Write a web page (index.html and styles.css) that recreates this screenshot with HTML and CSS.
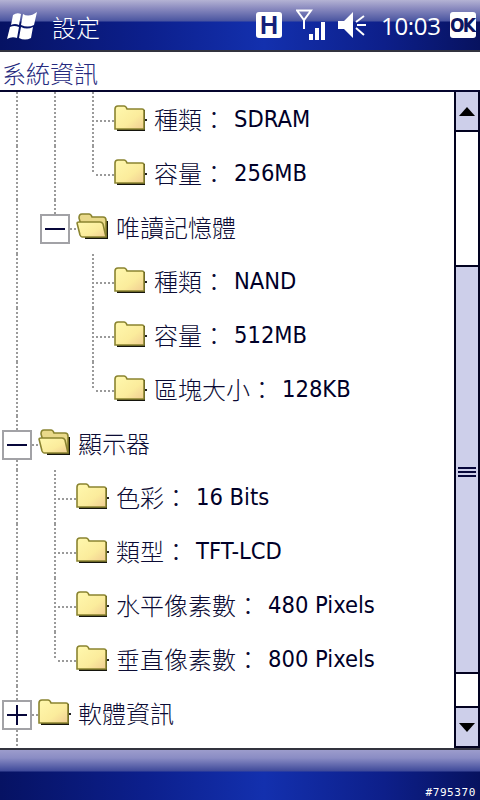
FILE: index.html
```html
<!DOCTYPE html>
<html lang="zh-Hant">
<head>
<meta charset="utf-8">
<title>設定</title>
<link rel="stylesheet" href="styles.css">
</head>
<body>
<svg class="defs" width="0" height="0" aria-hidden="true">
  <defs>
    <linearGradient id="fy" x1="0" y1="0" x2="1" y2="1">
      <stop offset="0" stop-color="#fff8ae"/>
      <stop offset=".6" stop-color="#fbec9c"/>
      <stop offset="1" stop-color="#f0cc92"/>
    </linearGradient>
    <symbol id="closed" viewBox="0 0 34 28">
      <path d="M3 5h28v21H3z" fill="#14140c"/>
      <path d="M30 14h3v2h-3z" fill="#222"/>
      <path d="M1 4Q1 1 4 1h6q2 0 3 3h15q2 0 2 2v18H1z" fill="url(#fy)" stroke="#8a8430" stroke-width="1.600"/>
    </symbol>
    <symbol id="open" viewBox="0 0 34 28">
      <path d="M9 8h23v18H9z" fill="#14140c"/>
      <path d="M3 5Q3 1 6 1h7q2 0 3 3h11q3 0 3 3v16H8z" fill="#e9d98a" stroke="#8a8430" stroke-width="1.600"/>
      <path d="M1 10q0-1 2-1h21q2 0 3 2l3 13H6q-1 0-2-2z" fill="url(#fy)" stroke="#8a8430" stroke-width="1.600"/>
    </symbol>
  </defs>
</svg>
<div class="phone">
  <header class="topbar">
    <svg class="logo" width="32" height="30" viewBox="0 0 32 30" aria-hidden="true">
      <path d="M7 4Q11 1 15 3L13 14Q9 12 5 14Z M17 3Q23 7 31 1L28 14Q22 17 15 14Z M4 16Q8 14 13 16L11 27Q6 25 1 28Z M15 16Q21 19 27 16L25 27Q19 30 13 27Z" fill="#fff"/>
    </svg>
    <span class="title">設定</span>
    <span class="spacer"></span>
    <span class="badge badge-h">H</span>
    <svg class="signal" width="30" height="32" viewBox="0 0 30 32" aria-hidden="true">
      <path d="M1 1.500H15L8 11ZM8 11V20" fill="none" stroke="#fff" stroke-width="2"/>
      <path d="M13 25h4v6h-4zM19 19h4v12h-4zM25 13h4v18h-4z" fill="#fff"/>
    </svg>
    <svg class="speaker" width="28" height="28" viewBox="0 0 28 28" aria-hidden="true">
      <path d="M0 10h6L15 1v26L6 18H0z" fill="#fff"/>
      <path d="M18 11L26 5M19 14H28M18 17L26 24" stroke="#fff" stroke-width="2" fill="none"/>
    </svg>
    <span class="clock">10:03</span>
    <span class="badge badge-ok">OK</span>
  </header>
  <div class="subtitle">系統資訊</div>
  <main class="content">
    <div class="tree">
      <div class="row"><i class="cell pass"></i><i class="cell pass"></i><i class="cell tee"></i><svg class="folder"><use href="#closed"/></svg><span class="label">種類：<span class="val">SDRAM</span></span></div>
      <div class="row"><i class="cell pass"></i><i class="cell pass"></i><i class="cell last"></i><svg class="folder"><use href="#closed"/></svg><span class="label">容量：<span class="val">256MB</span></span></div>
      <div class="row"><i class="cell pass"></i><i class="cell last"><b class="box minus"></b></i><svg class="folder"><use href="#open"/></svg><span class="label">唯讀記憶體</span></div>
      <div class="row"><i class="cell pass"></i><i class="cell"></i><i class="cell tee"></i><svg class="folder"><use href="#closed"/></svg><span class="label">種類：<span class="val">NAND</span></span></div>
      <div class="row"><i class="cell pass"></i><i class="cell"></i><i class="cell tee"></i><svg class="folder"><use href="#closed"/></svg><span class="label">容量：<span class="val">512MB</span></span></div>
      <div class="row"><i class="cell pass"></i><i class="cell"></i><i class="cell last"></i><svg class="folder"><use href="#closed"/></svg><span class="label">區塊大小：<span class="val">128KB</span></span></div>
      <div class="row"><i class="cell tee"><b class="box minus"></b></i><svg class="folder"><use href="#open"/></svg><span class="label">顯示器</span></div>
      <div class="row"><i class="cell pass"></i><i class="cell tee"></i><svg class="folder"><use href="#closed"/></svg><span class="label">色彩：<span class="val">16 Bits</span></span></div>
      <div class="row"><i class="cell pass"></i><i class="cell tee"></i><svg class="folder"><use href="#closed"/></svg><span class="label">類型：<span class="val">TFT-LCD</span></span></div>
      <div class="row"><i class="cell pass"></i><i class="cell tee"></i><svg class="folder"><use href="#closed"/></svg><span class="label">水平像素數：<span class="val">480 Pixels</span></span></div>
      <div class="row"><i class="cell pass"></i><i class="cell last"></i><svg class="folder"><use href="#closed"/></svg><span class="label">垂直像素數：<span class="val">800 Pixels</span></span></div>
      <div class="row"><i class="cell tee"><b class="box plus"></b></i><svg class="folder"><use href="#closed"/></svg><span class="label">軟體資訊</span></div>
      <div class="tail"><i class="cell pass"></i></div>
    </div>
    <aside class="scrollbar">
      <div class="sb-btn"><span class="arrow-up"></span></div>
      <div class="sb-track sb-track-top"></div>
      <div class="sb-thumb"><span class="grip"></span></div>
      <div class="sb-track sb-track-bottom"></div>
      <div class="sb-btn"><span class="arrow-down"></span></div>
    </aside>
  </main>
  <footer class="bottombar"><span class="watermark">#795370</span></footer>
</div>
</body>
</html>
```
FILE: styles.css
```css
* { box-sizing: border-box; }
html, body { margin: 0; padding: 0; }
body { background: #fff; font-family: "DejaVu Sans", "Noto Sans CJK TC", sans-serif; overflow: hidden; }
.defs { position: absolute; }
.phone { width: 480px; height: 800px; display: flex; flex-direction: column; }

.topbar {
  height: 52px; display: flex; align-items: center; color: #fff;
  border-bottom: 2px solid #33343f;
  background:
    linear-gradient(to bottom, #b4b3d4 0, #8c8cc0 8px, #4a55a0 21px, rgba(0,0,0,0) 22px),
    linear-gradient(to right, #061263 0, #0c1f8c 30%, #1330ae 55%, #0d1f8a 80%, #07125f 100%);
}
.logo { margin-left: 6px; margin-top: 2px; flex: none; }
.title { margin-left: 14px; font-size: 24px; line-height: 28px; font-family: "Noto Sans CJK TC", sans-serif; font-weight: 300; margin-top: 3px; }
.spacer { flex: 1; }
.badge {
  width: 26px; height: 26px; border-radius: 3px; background: #fff; color: #14207a;
  display: flex; align-items: center; justify-content: center; font-weight: 700;
  font-family: "Liberation Sans", sans-serif; flex: none;
}
.badge-h { font-size: 25px; }
.badge-ok { font-family: "DejaVu Sans", sans-serif; font-stretch: condensed; font-size: 19px; letter-spacing: -2px; padding-right: 2px; color: #0d1660; margin-left: 9px; margin-right: 4px; }
.signal { margin-left: 14px; flex: none; }
.speaker { margin-left: 12px; flex: none; }
.clock { margin-left: 15px; font-size: 24px; font-family: "Open Sans", sans-serif; line-height: 28px; width: 60px; letter-spacing: -.3px; margin-top: 2px; }

.subtitle {
  height: 40px; padding: 6px 0 0 2px; font-size: 24px; line-height: 30px; color: #262a7e;
  border-bottom: 2px solid #05052e; font-family: "Noto Sans CJK TC", sans-serif; font-weight: 300;
}

.content { flex: 1; display: flex; min-height: 0; }
.tree { flex: 1; min-width: 0; }
.row { height: 54px; display: flex; align-items: stretch; }
.tail { height: 8px; display: flex; }
.cell { width: 38px; flex: none; display: block; position: relative; background-repeat: no-repeat; }
.pass, .tee {
  background-image: linear-gradient(#9a9a9a 50%, transparent 50%);
  background-size: 2px 4px; background-position: 16px 0; background-repeat: repeat-y;
}
.tee::after, .last::after {
  content: ""; position: absolute; left: 18px; right: 0; top: 28px; height: 2px;
  background: linear-gradient(to right, transparent 50%, #9a9a9a 50%) 0 0 / 4px 2px repeat-x;
}
.last::before {
  content: ""; position: absolute; left: 16px; top: 0; width: 2px; height: 28px;
  background: linear-gradient(#9a9a9a 50%, transparent 50%) 0 0 / 2px 4px repeat-y;
}
.box {
  position: absolute; z-index: 1; left: 2px; top: 14px; width: 30px; height: 30px;
  border: 2px solid #a2a2a6; background-color: #fff; background-repeat: no-repeat;
}
.minus { background-image: linear-gradient(#06063a, #06063a); background-size: 20px 2px; background-position: 3px 12px; }
.plus {
  background-image: linear-gradient(#06063a, #06063a), linear-gradient(#06063a, #06063a);
  background-size: 20px 2px, 2px 20px; background-position: 3px 12px, 12px 3px;
}
.folder { width: 34px; height: 28px; flex: none; margin-top: 13px; }
.label {
  display: flex; align-items: center; height: 54px;
  margin-left: 6px; font-size: 24px; font-weight: 300; line-height: 30px; color: #0b0b34; white-space: pre;
  font-family: "Noto Sans CJK TC", sans-serif;
}
.val {
  margin-left: 8px; font-size: 23.500px; font-weight: 400; color: #000028; line-height: 30px;
  font-family: "DejaVu Sans", sans-serif; font-stretch: condensed;
}

.scrollbar {
  width: 26px; flex: none; display: flex; flex-direction: column;
  border-left: 2px solid #020220; border-right: 2px solid #020220; border-bottom: 2px solid #020220;
}
.sb-btn { height: 38px; background: #cdcfea; flex: none; display: flex; align-items: center; justify-content: center; }
.sb-track { background: #fff; flex: none; border-top: 2px solid #020220; border-bottom: 2px solid #020220; }
.sb-track-top { height: 137px; }
.sb-track-bottom { height: 36px; }
.sb-thumb { flex: 1; background: #cdcfea; display: flex; align-items: center; justify-content: center; padding-top: 4px; }
.grip { width: 18px; height: 10px; border-top: 2px solid #06063a; border-bottom: 2px solid #06063a; background: linear-gradient(#06063a, #06063a) 0 2px / 18px 2px no-repeat; }
.arrow-up { border-left: 8px solid transparent; border-right: 8px solid transparent; border-bottom: 9px solid #000; }
.arrow-down { border-left: 8px solid transparent; border-right: 8px solid transparent; border-top: 9px solid #000; }

.bottombar {
  height: 52px; display: flex; justify-content: flex-end; align-items: flex-end;
  border-top: 2px solid #33343f;
  background:
    linear-gradient(to bottom, #9c9ccc 0, #8a8cc4 8px, #3f4a9a 21px, rgba(0,0,0,0) 22px),
    linear-gradient(to right, #061263 0, #0c1f8c 30%, #1330ae 55%, #0d1f8a 80%, #07125f 100%);
}
.watermark { font-family: "DejaVu Sans Mono", monospace; font-size: 11px; line-height: 14px; letter-spacing: .6px; color: #fff; padding: 0 4px 0 0; }
```
